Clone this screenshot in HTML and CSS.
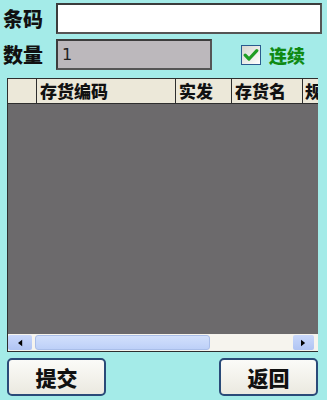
FILE: index.html
```html
<!DOCTYPE html>
<html lang="zh-CN">
<head>
<meta charset="utf-8">
<title>条码扫描</title>
<link rel="stylesheet" href="styles.css">
</head>
<body>
<div class="screen">
  <div class="row row-barcode">
    <span class="lbl">条码</span>
    <div class="field field-barcode"></div>
  </div>
  <div class="row row-qty">
    <span class="lbl">数量</span>
    <div class="field field-qty">1</div>
    <div class="chk">
      <span class="box">
        <svg viewBox="0 0 16 16" width="16" height="16"><path d="M2.2 8.2 L6 12 L13.8 3.6" fill="none" stroke="#1f9e23" stroke-width="3.2" stroke-linecap="round" stroke-linejoin="round"/></svg>
      </span>
      <span class="chk-text">连续</span>
    </div>
  </div>
  <div class="grid">
    <div class="ghead">
      <div class="col col0"></div>
      <div class="col col1">存货编码</div>
      <div class="col col2">实发</div>
      <div class="col col3">存货名</div>
      <div class="col col4">规</div>
    </div>
    <div class="gbody"></div>
    <div class="hscroll">
      <div class="sbtn"><svg viewBox="0 0 6 8" width="5" height="8"><path d="M5 0 L0 4 L5 8 Z" fill="#000"/></svg></div>
      <div class="track"><div class="thumb"></div></div>
      <div class="sbtn sbtn-r"><svg viewBox="0 0 6 8" width="5" height="8"><path d="M0 0 L5 4 L0 8 Z" fill="#000"/></svg></div>
    </div>
  </div>
  <div class="btns">
    <button class="btn">提交</button>
    <button class="btn">返回</button>
  </div>
</div>
</body>
</html>
```
FILE: styles.css
```css
html, body {
  margin: 0;
  padding: 0;
  background: #a4ebe8;
}
body {
  width: 327px;
  height: 400px;
  overflow: hidden;
  font-family: "Noto Sans CJK SC", "Noto Sans", sans-serif;
}
.screen {
  display: flex;
  flex-direction: column;
  padding-top: 3px;
}
.row {
  display: flex;
  align-items: center;
  height: 31px;
  padding-left: 3px;
}
.row-qty {
  margin-top: 5px;
}
.lbl {
  width: 53px;
  font-size: 20px;
  font-weight: 900;
  color: #111;
  line-height: 31px;
}
.field {
  box-sizing: border-box;
  height: 31px;
  border: 2px solid #3c3c3c;
  border-right-color: #555;
  border-bottom-color: #555;
}
.field-barcode {
  width: 266px;
  background: #ffffff;
}
.field-qty {
  width: 156px;
  background: #bcb8bc;
  font-family: "DejaVu Sans", sans-serif;
  font-size: 16px;
  line-height: 27px;
  padding-left: 4px;
  color: #222;
}
.chk {
  display: flex;
  align-items: center;
  margin-left: 29px;
}
.box {
  box-sizing: border-box;
  width: 20px;
  height: 20px;
  border: 1px solid #2a5a8e;
  background: linear-gradient(135deg, #d6d6ce, #ffffff);
  display: flex;
  align-items: center;
  justify-content: center;
}
.chk-text {
  margin-left: 8px;
  font-size: 18px;
  font-weight: 900;
  color: #0f8a14;
}
.grid {
  box-sizing: border-box;
  margin-top: 8px;
  margin-left: 7px;
  width: 311px;
  height: 274px;
  border: 1px solid #2e2e2e;
  border-right: none;
  display: flex;
  flex-direction: column;
  overflow: hidden;
}
.ghead {
  display: flex;
  height: 24px;
  flex: none;
  background: #ece8d9;
  border-bottom: 1px solid #2e2e2e;
  overflow: hidden;
  white-space: nowrap;
}
.col {
  box-sizing: border-box;
  flex: none;
  height: 24px;
  border-right: 1px solid #2e2e2e;
  font-size: 17px;
  font-weight: 900;
  color: #111;
  line-height: 24px;
  padding-left: 3px;
  overflow: hidden;
}
.col0 { width: 29px; }
.col1 { width: 139px; }
.col2 { width: 56px; }
.col3 { width: 71px; }
.col4 { width: 16px; border-right: none; padding-left: 2px; }
.gbody {
  flex: 1;
  background: #6c6a6c;
}
.hscroll {
  display: flex;
  height: 17px;
  flex: none;
  background: #f6f4ee;
  padding: 1px 0;
  box-sizing: border-box;
}
.sbtn {
  flex: none;
  width: 24px;
  height: 15px;
  background: linear-gradient(#c9d8fb, #b0c4f3);
  border-radius: 2px;
  display: flex;
  align-items: center;
  justify-content: center;
}
.sbtn-r {
  width: 21px;
  margin-right: 4px;
}
.track {
  flex: 1;
  padding-left: 3px;
  padding-right: 83px;
  display: flex;
}
.thumb {
  flex: 1;
  height: 15px;
  box-sizing: border-box;
  background: linear-gradient(#d2e0fc, #bdd0f8);
  border: 1px solid #a9bee9;
  border-radius: 3px;
}
.btns {
  display: flex;
  justify-content: space-between;
  margin-top: 6px;
  padding-left: 7px;
  padding-right: 9px;
}
.btn {
  box-sizing: border-box;
  width: 99px;
  height: 38px;
  border: 2px solid #2a4a78;
  border-radius: 5px;
  background: linear-gradient(#fbfbf8, #ebe9e0);
  font-family: "Noto Sans CJK SC", "Noto Sans", sans-serif;
  font-size: 21px;
  font-weight: 900;
  color: #111;
  padding: 0;
  margin: 0;
  line-height: 34px;
}
```
